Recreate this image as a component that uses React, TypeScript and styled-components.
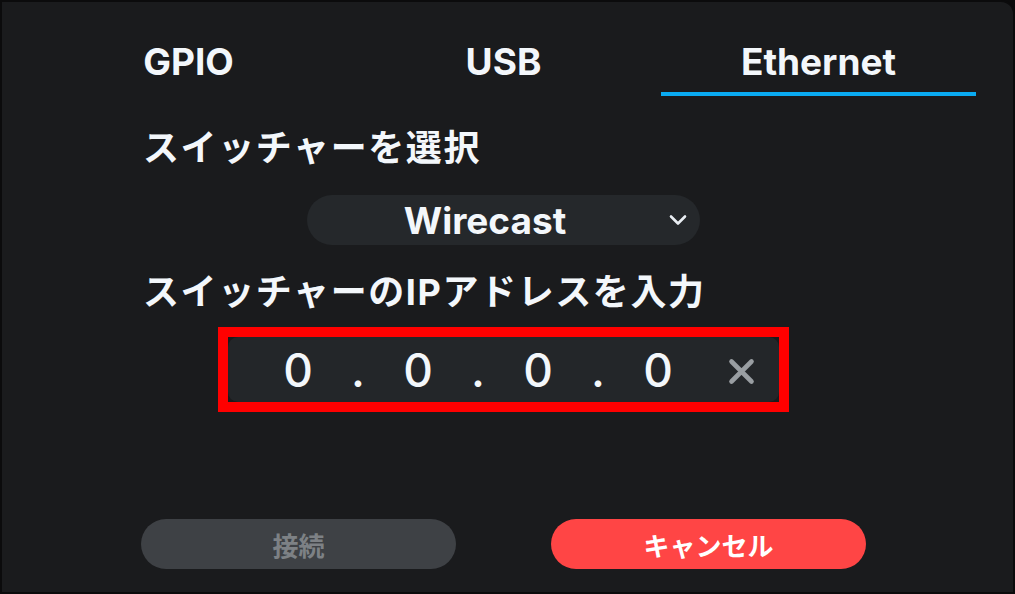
import React, { useState } from "react";
import styled, { createGlobalStyle } from "styled-components";

const GlobalStyle = createGlobalStyle`
  html, body {
    margin: 0;
    padding: 0;
    background: #0b0b0c;
  }
  body {
    font-family: Inter, "Noto Sans CJK JP", sans-serif;
    -webkit-font-smoothing: antialiased;
  }
`;

const tabs = ["GPIO", "USB", "Ethernet"];
const segments = ["0", "0", "0", "0"];

const App: React.FC = () => {
  const [active, setActive] = useState(2);

  return (
    <>
      <GlobalStyle />
      <Panel>
        <TabBar>
          {tabs.map((t, i) => (
            <Tab key={t} $active={i === active} onClick={() => setActive(i)}>
              {t}
            </Tab>
          ))}
        </TabBar>
        <Body>
          <Label>スイッチャーを選択</Label>
          <Select>
            <SelectValue>Wirecast</SelectValue>
            <svg width="20" height="12" viewBox="0 0 20 12">
              <path
                d="M3 2.5 L10 9.5 L17 2.5"
                fill="none"
                stroke="#e9eef3"
                strokeWidth="2.6"
                strokeLinecap="round"
                strokeLinejoin="round"
              />
            </svg>
          </Select>
          <Label $top={25}>スイッチャーのIPアドレスを入力</Label>
          <Highlight>
            <IpInput>
              <Segments>
                {segments.map((s, i) => (
                  <React.Fragment key={i}>
                    {i > 0 && <Dot>.</Dot>}
                    <Segment>{s}</Segment>
                  </React.Fragment>
                ))}
              </Segments>
              <ClearButton aria-label="clear">
                <svg width="27" height="27" viewBox="0 0 27 27">
                  <path
                    d="M3.5 3.5 L23.5 23.5 M23.5 3.5 L3.5 23.5"
                    stroke="#999ea2"
                    strokeWidth="4.6"
                    strokeLinecap="round"
                  />
                </svg>
              </ClearButton>
            </IpInput>
          </Highlight>
          <Actions>
            <Button $variant="disabled">接続</Button>
            <Button $variant="danger">キャンセル</Button>
          </Actions>
        </Body>
      </Panel>
    </>
  );
};

export default App;

const Panel = styled.div`
  box-sizing: border-box;
  width: 1015px;
  height: 594px;
  background: #1a1b1d;
  border: 2px solid #0b0b0c;
  border-top-right-radius: 14px;
  display: flex;
  flex-direction: column;
  overflow: hidden;
`;

const TabBar = styled.div`
  display: grid;
  grid-template-columns: repeat(3, 315px);
  margin: 38px 0 0 29px;
`;

const Tab = styled.div<{ $active?: boolean }>`
  font-size: 37px;
  font-weight: 700;
  line-height: 44px;
  color: #f3f7fb;
  text-align: center;
  padding-bottom: 8px;
  border-bottom: 4px solid ${(p) => (p.$active ? "#0aabf2" : "transparent")};
  cursor: pointer;
`;

const Body = styled.div`
  width: 945px;
  margin-left: 29px;
  display: flex;
  flex-direction: column;
`;

const Label = styled.div<{ $top?: number }>`
  margin: ${(p) => p.$top ?? 30}px 0 0 112px;
  font-family: Inter, "Noto Sans CJK JP", sans-serif;
  font-size: 36px;
  font-weight: 700;
  line-height: 44px;
  letter-spacing: 1.6px;
  color: #f3f7fb;
`;

const Select = styled.div`
  align-self: center;
  margin-top: 25px;
  width: 393px;
  height: 50px;
  box-sizing: border-box;
  border-radius: 25px;
  background: #25282b;
  display: flex;
  align-items: center;
  gap: 5px;
  padding-right: 12px;
`;

const SelectValue = styled.div`
  flex: 1;
  text-align: center;
  font-size: 37px;
  font-weight: 700;
  color: #f3f7fb;
`;

const Highlight = styled.div`
  align-self: center;
  margin-top: 13px;
  border: 10px solid #ff0000;
  width: 571px;
  height: 85px;
  box-sizing: border-box;
`;

const IpInput = styled.div`
  height: 100%;
  border-radius: 10px;
  background: #232629;
  display: flex;
  align-items: center;
  padding: 0 24px 0 40px;
`;

const Segments = styled.div`
  display: flex;
  align-items: center;
`;

const Segment = styled.span`
  width: 60px;
  text-align: center;
  font-size: 46px;
  font-weight: 500;
  color: #f3f7fb;
`;

const Dot = styled(Segment)``;

const ClearButton = styled.div`
  margin-left: auto;
  width: 27px;
  height: 27px;
  display: flex;
  margin-top: 4px;
`;

const Actions = styled.div`
  align-self: center;
  margin-top: 107px;
  display: flex;
  gap: 95px;
`;

const Button = styled.button<{ $variant: "disabled" | "danger" }>`
  width: 315px;
  height: 50px;
  border: none;
  border-radius: 25px;
  font-family: Inter, "Noto Sans CJK JP", sans-serif;
  font-size: 26px;
  font-weight: 700;
  background: ${(p) => (p.$variant === "danger" ? "#ff4545" : "#3e4145")};
  color: ${(p) => (p.$variant === "danger" ? "#ffffff" : "#7d8185")};
`;
